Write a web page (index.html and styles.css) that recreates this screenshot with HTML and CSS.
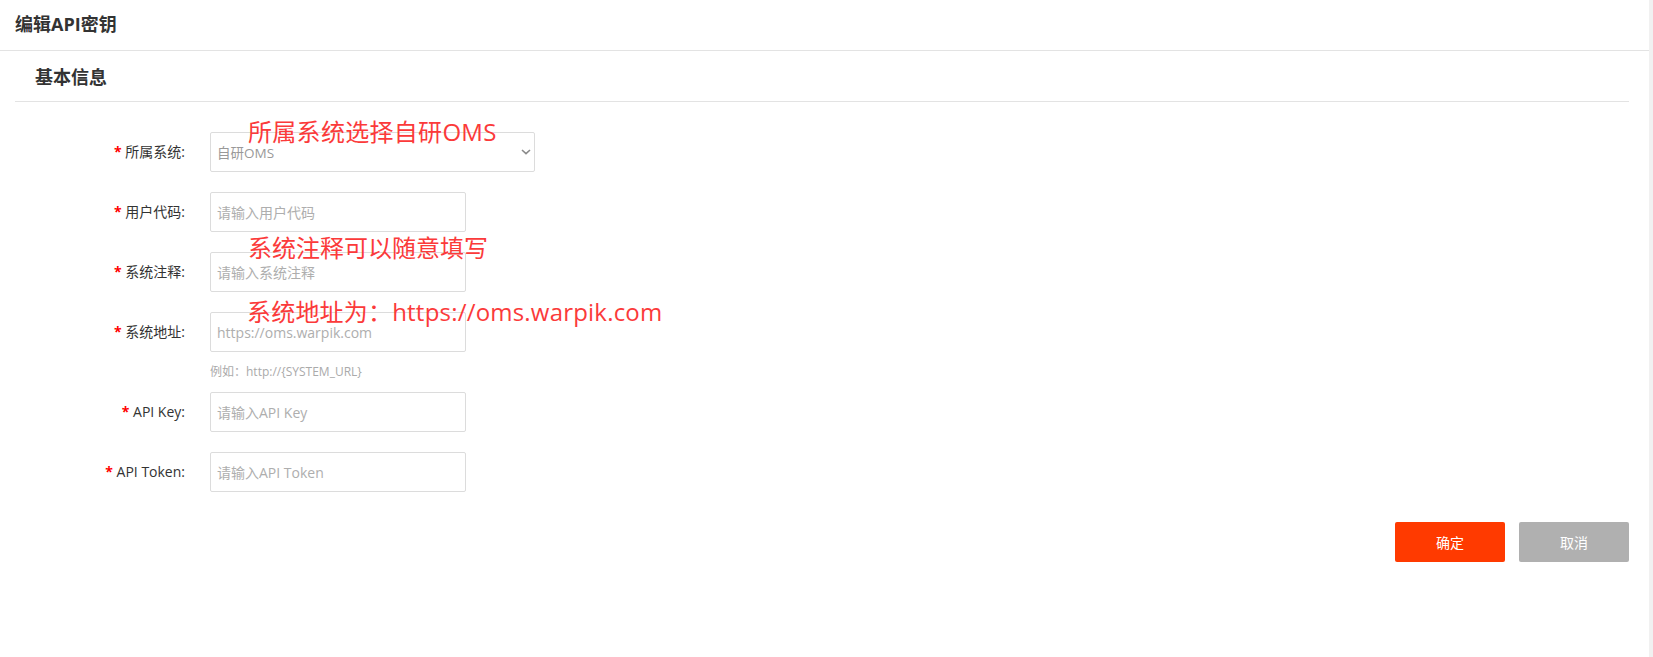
FILE: index.html
```html
<!DOCTYPE html>
<html lang="zh-CN">
<head>
<meta charset="utf-8">
<title>编辑API密钥</title>
<link rel="stylesheet" href="styles.css">
</head>
<body>
<div class="page">
  <div class="main">
    <header class="header"><h1 class="title">编辑API密钥</h1></header>
    <section class="section">
      <h2 class="section-title">基本信息</h2>
      <form class="form">
        <div class="row">
          <label class="label"><span class="star">*</span> 所属系统:</label>
          <div class="field">
            <div class="select">
              <span class="select-value">自研OMS</span>
              <svg class="chevron" width="10" height="6" viewBox="0 0 10 6"><path d="M1 1 L5 4.6 L9 1" fill="none" stroke="#8a8a8a" stroke-width="1.6"/></svg>
            </div>
          </div>
        </div>
        <div class="row">
          <label class="label"><span class="star">*</span> 用户代码:</label>
          <div class="field"><input class="input" placeholder="请输入用户代码"></div>
        </div>
        <div class="row">
          <label class="label"><span class="star">*</span> 系统注释:</label>
          <div class="field"><input class="input" placeholder="请输入系统注释"></div>
        </div>
        <div class="row has-hint">
          <label class="label"><span class="star">*</span> 系统地址:</label>
          <div class="field">
            <input class="input" placeholder="https://oms.warpik.com">
            <div class="hint">例如：http://{SYSTEM_URL}</div>
          </div>
        </div>
        <div class="row">
          <label class="label"><span class="star">*</span> API Key:</label>
          <div class="field"><input class="input" placeholder="请输入API Key"></div>
        </div>
        <div class="row">
          <label class="label"><span class="star">*</span> API Token:</label>
          <div class="field"><input class="input" placeholder="请输入API Token"></div>
        </div>
        <div class="actions">
          <button type="button" class="btn btn-primary">确定</button>
          <button type="button" class="btn btn-cancel">取消</button>
        </div>
      </form>
    </section>
    <div class="note note-1">所属系统选择自研OMS</div>
    <div class="note note-2">系统注释可以随意填写</div>
    <div class="note note-3">系统地址为：https://oms.warpik.com</div>
  </div>
  <div class="scrollbar"></div>
</div>
</body>
</html>
```
FILE: styles.css
```css
* { box-sizing: border-box; }
html, body { margin: 0; padding: 0; background: #fff; }
body {
  font-family: "Open Sans", "Noto Sans CJK SC", sans-serif;
  color: #333;
  font-size: 14px;
}
.page { display: flex; height: 657px; overflow: hidden; }
.main { flex: 1; position: relative; }
.scrollbar { width: 4px; background: #f1f1f1; }

.header {
  height: 51px;
  border-bottom: 1px solid #e3e3e3;
  display: flex;
  align-items: center;
  padding-left: 15px;
}
.title { margin: 0; font-size: 18px; font-weight: 700; color: #333; line-height: 24px; padding-bottom: 2px; }

.section { margin: 0 20px 0 15px; }
.section-title {
  margin: 0;
  height: 51px;
  border-bottom: 1px solid #e3e3e3;
  padding-left: 20px;
  font-size: 18px;
  font-weight: 700;
  color: #333;
  display: flex;
  align-items: center;
}

.form { padding-top: 30px; }
.row { display: flex; align-items: flex-start; margin-bottom: 20px; }
.row.has-hint { margin-bottom: 10px; }
.label {
  width: 170px;
  text-align: right;
  line-height: 40px;
  font-size: 14px;
  color: #333;
  margin-right: 25px;
}
.star { color: #f00; font-weight: 700; }
.field { display: flex; flex-direction: column; }
.input {
  width: 256px;
  height: 40px;
  border: 1px solid #dcdcdc;
  border-radius: 2px;
  padding: 0 6px;
  font-family: "Open Sans", "Noto Sans CJK SC", sans-serif;
  font-size: 14px;
  color: #333;
  outline: none;
}
.input::placeholder { color: #aeaeae; }
.select {
  width: 325px;
  height: 40px;
  border: 1px solid #dcdcdc;
  border-radius: 2px;
  padding: 0 3px 0 6px;
  display: flex;
  align-items: center;
  justify-content: space-between;
}
.select-value { font-size: 13.5px; color: #999; }
.hint {
  margin-top: 10px;
  line-height: 20px;
  font-size: 12px;
  color: #aaa;
}

.actions {
  display: flex;
  justify-content: flex-end;
  gap: 14px;
  margin-top: 30px;
}
.btn {
  width: 110px;
  height: 40px;
  border: none;
  border-radius: 2px;
  color: #fff;
  font-family: "Open Sans", "Noto Sans CJK SC", sans-serif;
  font-size: 14px;
}
.btn-primary { background: #ff3a00; }
.btn-cancel { background: #b0b0b0; }

.note {
  position: absolute;
  font-family: "Open Sans", "Noto Sans CJK SC", sans-serif;
  font-size: 24px;
  line-height: 24px;
  color: #fb3a3a;
  white-space: nowrap;
}
.note-1 { left: 248px; top: 120px; letter-spacing: 0.3px; }
.note-2 { left: 248px; top: 236px; }
.note-3 { left: 247px; top: 300px; letter-spacing: 0.2px; }
```
